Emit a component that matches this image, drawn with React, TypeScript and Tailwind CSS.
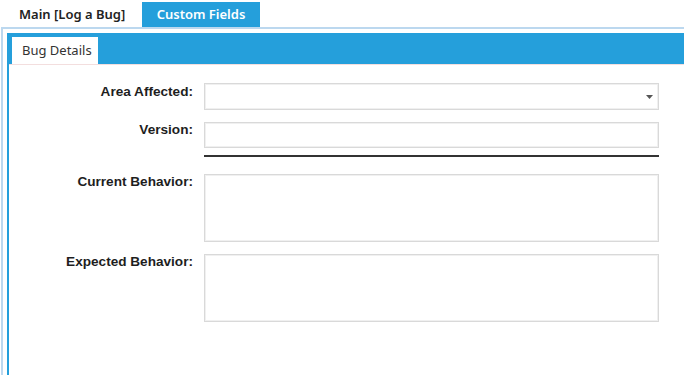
import React from 'react';

const tabFont = { fontFamily: '"Noto Sans", "Open Sans", sans-serif' };

const FIELDS = [
  { label: 'Current Behavior:', key: 'current' },
  { label: 'Expected Behavior:', key: 'expected' },
];

export default function App() {
  const boxClass = 'w-full bg-white border border-[#d9d9d9] shadow-[inset_0_0_0_1px_#f0f0f0]';
  const labelClass = "text-right text-[13.6px] leading-4 font-bold text-[#1e1e1e] font-['Liberation_Sans',Arial,sans-serif]";

  return (
    <div className="w-[684px] h-[375px] bg-white overflow-hidden">
      {/* top tabs */}
      <div className="flex items-end h-[27px] pl-[10px]" style={tabFont}>
        <div className="h-[25px] w-[132px] flex items-center pl-[9px] text-[13px] font-semibold text-[#222]">
          Main [Log a Bug]
        </div>
        <div className="h-[25px] w-[118px] flex items-center justify-center bg-[#259fdb] text-[13px] font-semibold text-white">
          Custom Fields
        </div>
      </div>

      {/* frame */}
      <div className="ml-[1px] border-l-2 border-t-2 border-[#bcd8ef] pt-[4px] pl-[4px] h-[348px]">
        <div className="border-l-2 border-[#259fdb] h-full flex flex-col">
          <div className="h-[32px] bg-[#259fdb] flex items-end pl-[3px] border-b border-[#f3dede]">
            <div className="h-[27px] w-[86px] bg-white flex items-center pl-[10px] text-[13px] text-[#333]" style={tabFont}>
              Bug Details
            </div>
          </div>

          {/* form */}
          <div className="grid grid-cols-[184px_455px] gap-x-[11px] pt-[18px]">
            <div className={labelClass + ' pt-[1px]'}>Area Affected:</div>
            <div className={boxClass + ' h-[27px] flex items-center justify-end pr-[5px]'}>
              <svg width="7" height="4" viewBox="0 0 7 4">
                <path d="M0 0h7L3.5 4z" fill="#555" />
              </svg>
            </div>

            <div className={labelClass + ' mt-[12px]'}>Version:</div>
            <div className={boxClass + ' h-[26px] mt-[12px]'} />

            <div />
            <div className="h-[2px] bg-[#333] mt-[7px]" />

            {FIELDS.map((f, i) => (
              <React.Fragment key={f.key}>
                <div className={labelClass + (i === 0 ? ' mt-[17px]' : ' mt-[12px]')}>{f.label}</div>
                <div className={boxClass + ' h-[68px]' + (i === 0 ? ' mt-[17px]' : ' mt-[12px]')} />
              </React.Fragment>
            ))}
          </div>
        </div>
      </div>
    </div>
  );
}
